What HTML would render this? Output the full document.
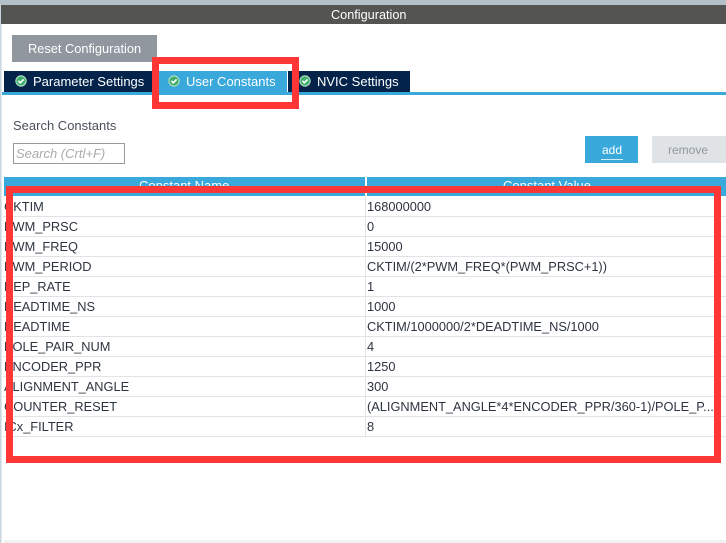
<!DOCTYPE html>
<html>
<head>
<meta charset="utf-8">
<style>
html,body{margin:0;padding:0;background:#fff;}
body{width:726px;height:543px;overflow:hidden;position:relative;font-family:"Liberation Sans",sans-serif;}
.a{position:absolute;}
.t{position:absolute;white-space:nowrap;line-height:16px;}
.row{position:absolute;left:3px;width:723px;height:1px;background:#e1e3e5;}
.c{position:absolute;white-space:nowrap;font-size:12.8px;line-height:16px;color:#2c3440;}
.tab{position:absolute;top:71px;height:21px;background:#03234b;}
.lbl{position:absolute;top:74px;font-size:13px;line-height:16px;color:#fff;white-space:nowrap;}
svg{position:absolute;}
</style>
</head>
<body>
<div class="a" style="left:0;top:0;width:726px;height:5px;background:#b5c1c8"></div>
<div class="a" style="left:1px;top:5px;width:725px;height:19px;background:#545553"></div>
<div class="a" style="left:0;top:5px;width:1px;height:538px;background:#c9d4dc"></div>
<div class="a" style="left:1px;top:24px;width:1px;height:519px;background:#e3e9ed"></div>
<div class="t" style="left:331px;top:7px;font-size:12.7px;color:#fff">Configuration</div>

<div class="a" style="left:12px;top:35px;width:145px;height:27px;background:#90979e"></div>
<div class="t" style="left:28px;top:41px;font-size:12.8px;color:#fff">Reset Configuration</div>

<div class="tab" style="left:4px;width:155px"></div>
<div class="tab" style="left:159px;width:128px;background:#39a9dc"></div>
<div class="a" style="left:287px;top:71px;width:1px;height:21px;background:#fff"></div>
<div class="tab" style="left:288px;width:122px"></div>
<div class="a" style="left:2px;top:92px;width:724px;height:3px;background:#39a9dc"></div>

<svg style="left:15px;top:75px" width="12" height="12" viewBox="0 0 12 12"><circle cx="6" cy="6" r="5.7" fill="#a9dcc0"/><circle cx="6" cy="6" r="4.5" fill="#3fae6a"/><path d="M3.4 5.8L5.3 7.8L8.6 4.4" fill="none" stroke="#fff" stroke-width="1.6"/></svg>
<div class="lbl" style="left:33px">Parameter Settings</div>
<svg style="left:168px;top:75px" width="12" height="12" viewBox="0 0 12 12"><circle cx="6" cy="6" r="5.7" fill="#a9dcc0"/><circle cx="6" cy="6" r="4.5" fill="#3fae6a"/><path d="M3.4 5.8L5.3 7.8L8.6 4.4" fill="none" stroke="#fff" stroke-width="1.6"/></svg>
<div class="lbl" style="left:186px">User Constants</div>
<svg style="left:299px;top:75px" width="12" height="12" viewBox="0 0 12 12"><circle cx="6" cy="6" r="5.7" fill="#a9dcc0"/><circle cx="6" cy="6" r="4.5" fill="#3fae6a"/><path d="M3.4 5.8L5.3 7.8L8.6 4.4" fill="none" stroke="#fff" stroke-width="1.6"/></svg>
<div class="lbl" style="left:317px">NVIC Settings</div>

<div class="t" style="left:13px;top:118px;font-size:13px;color:#4a4f5a">Search Constants</div>
<div class="a" style="left:13px;top:143px;width:110px;height:19px;border:1px solid #9a9a9a;background:#fff"></div>
<div class="t" style="left:16px;top:146px;font-size:13px;font-style:italic;color:#aaa">Search (Crtl+F)</div>

<div class="a" style="left:585px;top:136px;width:53px;height:27px;background:#39a9dc"></div>
<div class="t" style="left:602px;top:142px;font-size:12px;color:#fff">add</div>
<div class="a" style="left:601px;top:159px;width:22px;height:1px;background:#cde9f6"></div>
<div class="a" style="left:652px;top:136px;width:74px;height:27px;background:#e0e3e6"></div>
<div class="t" style="left:668px;top:142px;font-size:12px;color:#90979e">remove</div>

<div class="a" style="left:4px;top:177px;width:722px;height:19px;background:#39a9dc"></div>
<div class="a" style="left:365px;top:177px;width:2px;height:19px;background:#fff"></div>
<div class="t" style="left:139px;top:178px;font-size:13px;color:#fff">Constant Name</div>
<div class="t" style="left:503px;top:178px;font-size:13px;color:#fff">Constant Value</div>

<div class="a" style="left:365px;top:196px;width:1px;height:240px;background:#e1e3e5"></div>
<div class="row" style="top:216px"></div>
<div class="row" style="top:236px"></div>
<div class="row" style="top:256px"></div>
<div class="row" style="top:276px"></div>
<div class="row" style="top:296px"></div>
<div class="row" style="top:316px"></div>
<div class="row" style="top:336px"></div>
<div class="row" style="top:356px"></div>
<div class="row" style="top:376px"></div>
<div class="row" style="top:396px"></div>
<div class="row" style="top:416px"></div>
<div class="row" style="top:436px"></div>

<div class="c" style="left:4px;top:199px">CKTIM</div><div class="c" style="left:367px;top:199px">168000000</div>
<div class="c" style="left:4px;top:219px">PWM_PRSC</div><div class="c" style="left:367px;top:219px">0</div>
<div class="c" style="left:4px;top:239px">PWM_FREQ</div><div class="c" style="left:367px;top:239px">15000</div>
<div class="c" style="left:4px;top:259px">PWM_PERIOD</div><div class="c" style="left:367px;top:259px">CKTIM/(2*PWM_FREQ*(PWM_PRSC+1))</div>
<div class="c" style="left:4px;top:279px">REP_RATE</div><div class="c" style="left:367px;top:279px">1</div>
<div class="c" style="left:4px;top:299px">DEADTIME_NS</div><div class="c" style="left:367px;top:299px">1000</div>
<div class="c" style="left:4px;top:319px">DEADTIME</div><div class="c" style="left:367px;top:319px">CKTIM/1000000/2*DEADTIME_NS/1000</div>
<div class="c" style="left:4px;top:339px">POLE_PAIR_NUM</div><div class="c" style="left:367px;top:339px">4</div>
<div class="c" style="left:4px;top:359px">ENCODER_PPR</div><div class="c" style="left:367px;top:359px">1250</div>
<div class="c" style="left:4px;top:379px">ALIGNMENT_ANGLE</div><div class="c" style="left:367px;top:379px">300</div>
<div class="c" style="left:4px;top:399px">COUNTER_RESET</div><div class="c" style="left:367px;top:399px">(ALIGNMENT_ANGLE*4*ENCODER_PPR/360-1)/POLE_P...</div>
<div class="c" style="left:4px;top:419px">ICx_FILTER</div><div class="c" style="left:367px;top:419px">8</div>

<div class="a" style="left:4px;top:540px;width:722px;height:3px;background:#f0f1f3"></div>

<div class="a" style="left:152px;top:57px;width:133px;height:38px;border:7px solid #ff3636"></div>
<div class="a" style="left:6px;top:186px;width:701px;height:263px;border:7px solid #ff3636"></div>
</body>
</html>
